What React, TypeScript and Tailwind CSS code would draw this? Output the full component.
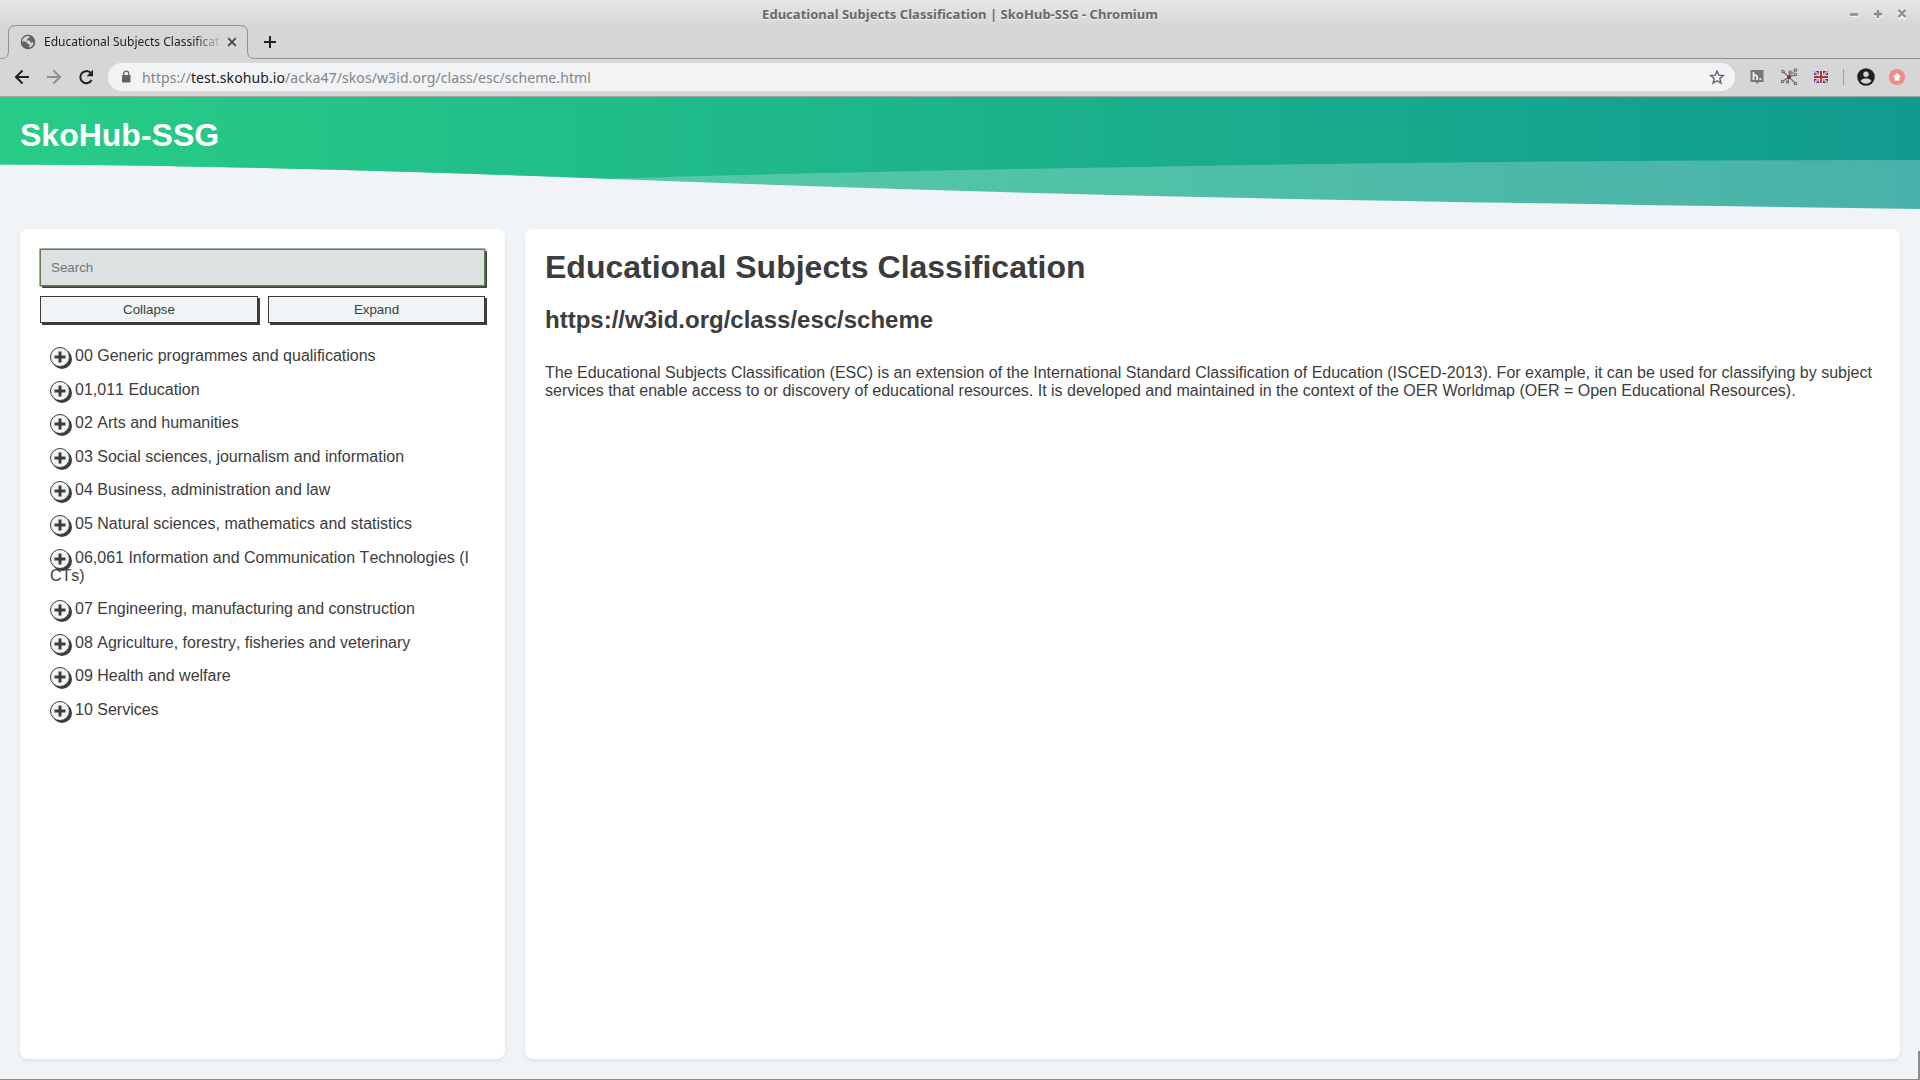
import React from "react";

const concepts = [
  "00 Generic programmes and qualifications",
  "01,011 Education",
  "02 Arts and humanities",
  "03 Social sciences, journalism and information",
  "04 Business, administration and law",
  "05 Natural sciences, mathematics and statistics",
  "06,061 Information and Communication Technologies (ICTs)",
  "07 Engineering, manufacturing and construction",
  "08 Agriculture, forestry, fisheries and veterinary",
  "09 Health and welfare",
  "10 Services",
];

function Chrome() {
  return (
    <div className="relative h-[97px] shrink-0 bg-[#d6d6d6] font-['Noto_Sans']">
      <div className="flex h-[25px] items-center bg-linear-to-b from-[#e7e7e7] to-[#d7d7d7]">
        <div className="w-[120px]" />
        <div className="flex-1 pt-[2px] text-center text-[13px] leading-[18px] font-bold tracking-[0.02px] text-[#696969] [text-shadow:0_1px_0_#f0f0f0]">
          Educational Subjects Classification | SkoHub-SSG - Chromium
        </div>
        <svg className="h-[25px] w-[120px]" viewBox="0 0 120 25" fill="none">
          <g stroke="#fff" strokeWidth="3" opacity=".7" transform="translate(0 1)">
            <path d="M50 14.5h8M74 14.5h8M78 10.500v8M98.500 11l7 7M105.500 11l-7 7" />
          </g>
          <g stroke="#8c8c8c" strokeWidth="2.400">
            <path d="M50 14.500h8M74 14h8M78 10v8M98.500 10l7 7M105.500 10l-7 7" />
          </g>
        </svg>
      </div>
      <div className="flex h-[34px]">
        <div className="relative h-[34px] w-[256px] shrink-0">
          <svg className="absolute inset-0 h-[34px] w-[256px]" fill="none">
            <path d="M0 33.500H1.500Q8.500 33.500 8.500 26.500V7.500Q8.500 .5 15.500 .5H240.500Q247.500 .5 247.500 7.500V26.500Q247.500 33.500 254.500 33.500H256" stroke="#8f8f8f" />
          </svg>
          <div className="flex h-[34px] items-center pl-[20px]">
            <svg className="h-4 w-4" viewBox="0 0 16 16">
              <circle cx="8" cy="8" r="7.200" fill="#5f6368" />
              <path d="M8.500 1.500c2.500 1 1 2.500-.5 2.500 0 1.500-1.500 1.500-2 2.500h3.500c.8 1 .5 2 1.500 2.200.9.200 1.700-.2 2.800-.4-.2 2.700-2 4.700-4.600 5.500L9 12.500c1-.5 1-2-.5-2.500-2.500-.5-1-2.200-3.500-2.500-1-.1-2-.1-3.200 0C1.800 4.500 4.500 1.800 8.500 1.500z" fill="#d6d6d6" />
              <circle cx="8" cy="8" r="6.600" fill="none" stroke="#5f6368" strokeWidth="1.200" />
            </svg>
            <span className="ml-2 w-[176px] overflow-hidden text-[12px] whitespace-nowrap text-[#222] [mask-image:linear-gradient(to_right,black_150px,transparent_178px)]">
              Educational Subjects Classification
            </span>
            <svg className="ml-[6px] h-[12px] w-[12px]" viewBox="0 0 12 12"><path d="M2.200 2.200l7.600 7.600M9.800 2.200L2.200 9.800" stroke="#4a4a4a" strokeWidth="1.900" /></svg>
          </div>
        </div>
        <div className="flex flex-1 items-center border-b border-[#8f8f8f] pl-[8px]">
          <svg className="h-3 w-3" viewBox="0 0 12 12"><path d="M6 0v12M0 6h12" stroke="#202124" strokeWidth="2" /></svg>
        </div>
      </div>
      <div className="flex h-[38px] items-center border-b border-[#a3a3a3] pb-px">
        <svg className="ml-[14px] h-4 w-4" viewBox="0 0 16 16" fill="none" stroke="#202124" strokeWidth="2"><path d="M15 8H2.500M8.500 1.500L2 8l6.500 6.500" /></svg>
        <svg className="ml-4 h-4 w-4" viewBox="0 0 16 16" fill="none" stroke="#8e8f90" strokeWidth="2"><path d="M1 8h12.500M7.500 1.500L14 8l-6.500 6.500" /></svg>
        <svg className="ml-4 h-4 w-4" viewBox="0 0 16 16"><path d="M13.600 11A6 6 0 1 1 12.500 3.800" fill="none" stroke="#202124" strokeWidth="2" /><path d="M15 .8v6.400H8.600z" fill="#202124" /></svg>
        <div className="ml-[14px] flex h-7 w-[1627px] items-center rounded-full bg-[#f1f3f4] pl-[13px]">
          <svg className="h-[14px] w-[10px]" viewBox="0 0 10 14"><rect x="1" y="5" width="8.500" height="7.500" rx=".8" fill="#5f6368" /><path d="M2.800 5V3.500a2.400 2.400 0 0 1 4.900 0V5" fill="none" stroke="#5f6368" strokeWidth="1.300" /></svg>
          <span className="ml-[11px] flex-1 text-[14px] tracking-[0.085px] text-[#80868b]">
            https://<span className="text-[#202124]">test.skohub.io</span>/acka47/skos/w3id.org/class/esc/scheme.html
          </span>
          <svg className="mr-[10px] h-4 w-4" viewBox="0 0 16 16" fill="none" stroke="#5f6368" strokeWidth="1.400"><path d="M8 2l1.800 4.200 4.500.4-3.400 3 1 4.400L8 11.700 4.100 14l1-4.400-3.400-3 4.500-.4z" /></svg>
        </div>
        <svg className="ml-[15px] h-4 w-[14px]" viewBox="0 0 14 16"><path d="M.5 1h13v12H9l-1.700 2-1.700-2H.5z" fill="#777" /><path d="M3.500 3v8M3.500 8q0-1.800 1.700-1.800T7 8v3" stroke="#eee" strokeWidth="1.800" fill="none" /><path d="M9.300 9.200h2V11h-2z" fill="#eee" /></svg>
        <svg className="ml-[16px] h-[18px] w-[18px]" viewBox="0 0 18 18" fill="none" stroke="#6d6d6d" strokeWidth="1.100">
          <path d="M9 9L3.500 4M9 9l6 6M9 9l5.500-6M9 9l-6 4M9 9l1-5M9 9l6-2M9 9l-1 5" />
          <circle cx="3" cy="3.500" r="1.300" /><circle cx="15.500" cy="2" r="1.300" /><circle cx="10" cy="4" r="1.300" /><circle cx="15.500" cy="6.500" r="1.200" /><circle cx="2.500" cy="13.500" r="1.300" /><circle cx="7.500" cy="14" r="1.200" /><circle cx="15.500" cy="15.500" r="1.300" /><circle cx="9" cy="9" r="1.200" fill="#8b1a3a" stroke="#8b1a3a" />
        </svg>
        <svg className="ml-[16px] h-[12px] w-[14px]" viewBox="0 0 14 12"><path fill="#2b4a94" d="M0 0h14v12H0z" /><path d="M0 0l14 12M14 0L0 12" stroke="#fff" strokeWidth="2" /><path d="M0 0l14 12M14 0L0 12" stroke="#d8232f" strokeWidth=".8" /><path d="M7 0v12M0 6h14" stroke="#fff" strokeWidth="3.600" /><path d="M7 0v12M0 6h14" stroke="#d8232f" strokeWidth="1.900" /></svg>
        <div className="ml-[15px] h-4 w-px bg-[#9f9f9f]" />
        <svg className="ml-[13px] h-[18px] w-[18px]" viewBox="0 0 18 18"><circle cx="9" cy="9" r="8.800" fill="#202124" /><circle cx="9" cy="6.300" r="2.700" fill="#d6d6d6" /><path d="M3.600 12.900c1-2 3.500-2.500 5.400-2.500s4.400.5 5.400 2.500A6.500 6.500 0 0 1 9 15.700a6.500 6.500 0 0 1-5.400-2.800z" fill="#d6d6d6" /></svg>
        <svg className="ml-[14px] h-4 w-4" viewBox="0 0 16 16"><circle cx="8" cy="8" r="8" fill="#f28b82" /><path d="M8 3.800L12.200 8.200H10.300V11.800H5.700V8.200H3.800z" fill="#fff" /></svg>
      </div>
    </div>
  );
}

function Wave() {
  return (
    <svg className="absolute inset-0 h-[113px] w-[1920px]" viewBox="0 97 1920 113">
      <defs>
        <linearGradient id="brand" gradientUnits="userSpaceOnUse" x1="0" y1="0" x2="1920" y2="0">
          <stop offset="0" stopColor="#28cc86" />
          <stop offset="1" stopColor="#119b90" />
        </linearGradient>
      </defs>
      <path d="M0 97H1920V209Q1640 205.500 1280 198.700Q950 192 640 180Q240 164.700 0 164.500z" fill="url(#brand)" opacity=".75" />
      <path d="M0 97H1920V160Q1600 160 1280 164.600Q860 171 610 178.700Q240 164.700 0 164.500z" fill="url(#brand)" />
    </svg>
  );
}

function Concept({ label }: { label: string }) {
  return (
    <li className="relative mb-[15.600px] leading-[18px] break-all">
      <span className="absolute top-0 left-0 flex h-5 w-5 items-center justify-center rounded-full border border-[#3c3c3c] bg-[#f0f4f7] shadow-[2px_2px_0_0_#3c3c3c]">
        <svg className="h-3 w-3" viewBox="0 0 12 12"><path d="M6 .5v11M.5 6h11" stroke="#3c3c3c" strokeWidth="3" /></svg>
      </span>
      <span className="ml-[25px]">{label}</span>
    </li>
  );
}

export default function App() {
  return (
    <div className="relative flex h-[1080px] w-[1920px] flex-col overflow-hidden bg-[#f0f4f7] font-['Liberation_Sans',sans-serif] text-[#3c3c3c]">
      <Chrome />
      <header className="relative h-[132px] shrink-0">
        <Wave />
        <h1 className="relative pt-[20px] pl-5 text-[32px] leading-[37px] font-bold text-white">SkoHub-SSG</h1>
      </header>
      <main className="flex h-[830px] gap-5 px-5">
        <nav className="w-[485px] shrink-0 rounded-[8px] bg-white p-5 shadow-[0_2px_4px_0_rgba(0,0,0,0.07)]">
          <input
            placeholder="Search"
            className="block h-[37px] w-[445px] rounded-[1px] border border-[#647a50] bg-[#dde1e2] px-[10px] text-[13.333px] shadow-[0_0_0_1px_#64785099,2px_2px_0_0_#3c3c3c] placeholder:text-[#757575]"
          />
          <div className="mt-[10px] flex gap-[10px] text-[13.333px]">
            <button className="h-[27px] w-[218px] border border-[#3c3c3c] bg-[#f0f4f7] shadow-[2px_2px_0_0_#3c3c3c]">Collapse</button>
            <button className="h-[27px] w-[217px] border border-[#3c3c3c] bg-[#f0f4f7] shadow-[2px_2px_0_0_#3c3c3c]">Expand</button>
          </div>
          <ul className="mt-[24px] ml-[10px] w-[425px] text-[16px] [font-kerning:none]">
            {concepts.map((c) => <Concept key={c} label={c} />)}
          </ul>
        </nav>
        <section className="flex-1 rounded-[8px] bg-white px-5 shadow-[0_2px_4px_0_rgba(0,0,0,0.07)]">
          <h1 className="mt-[20px] text-[32px] leading-[37px] font-bold">Educational Subjects Classification</h1>
          <h2 className="mt-[20px] text-[24px] leading-[27px] font-bold">https://w3id.org/class/esc/scheme</h2>
          <p className="mt-[31px] text-[16px] leading-[18px]">
            The Educational Subjects Classification (ESC) is an extension of the International Standard Classification of Education (ISCED-2013). For example, it can be used for classifying by subject services that enable access to or discovery of educational resources. It is developed and maintained in the context of the OER Worldmap (OER = Open Educational Resources).
          </p>
        </section>
      </main>
      <div className="absolute right-0 bottom-0 h-[29px] w-[2px] bg-[#8c8c8c]" />
      <div className="absolute bottom-0 left-0 h-px w-full bg-[#8c8c8c]" />
    </div>
  );
}
